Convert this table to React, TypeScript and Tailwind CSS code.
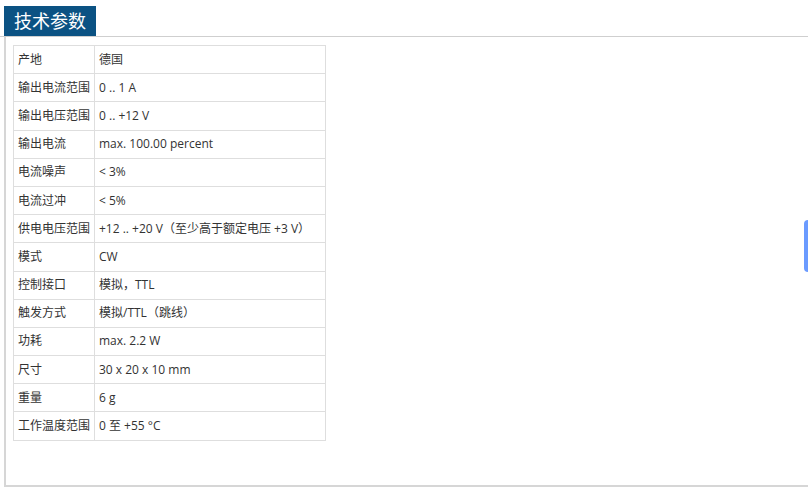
const rows: [string, string][] = [
  ["产地", "德国"],
  ["输出电流范围", "0 .. 1 A"],
  ["输出电压范围", "0 .. +12 V"],
  ["输出电流", "max. 100.00 percent"],
  ["电流噪声", "< 3%"],
  ["电流过冲", "< 5%"],
  ["供电电压范围", "+12 .. +20 V（至少高于额定电压 +3 V）"],
  ["模式", "CW"],
  ["控制接口", "模拟，TTL"],
  ["触发方式", "模拟/TTL（跳线）"],
  ["功耗", "max. 2.2 W"],
  ["尺寸", "30 x 20 x 10 mm"],
  ["重量", "6 g"],
  ["工作温度范围", "0 至 +55 °C"],
];

export default function App() {
  return (
    <div className="relative h-[487px] w-[808px] overflow-hidden bg-white font-['Open_Sans','Noto_Sans_CJK_SC',sans-serif] text-[#333]">
      <div className="pt-[6px]">
        <div className="flex items-end border-b border-[#cfcfcf]">
          <h2 className="ml-[4px] flex h-[30px] w-[92px] items-center justify-center bg-[#0b5283] text-[18px] leading-none text-white">
            技术参数
          </h2>
        </div>
        <div className="ml-[4px] h-[450px] border-b-2 border-l-2 border-[#d6d6d6] pl-[7px] pt-[8px]">
          <table className="w-[313px] border-collapse text-[12px]">
            <tbody>
              {rows.map(([k, v]) => (
                <tr key={k} className="h-[28.2px]">
                  <td className="w-[81px] whitespace-nowrap border border-[#dedede] pl-[4px] pr-[2px]">{k}</td>
                  <td className="whitespace-nowrap border border-[#dedede] pl-[4px]">{v}</td>
                </tr>
              ))}
            </tbody>
          </table>
        </div>
      </div>
      <div className="absolute right-[-6px] top-[220px] h-[52px] w-[10px] rounded-[4px] bg-[#6b9bff]" />
    </div>
  );
}
